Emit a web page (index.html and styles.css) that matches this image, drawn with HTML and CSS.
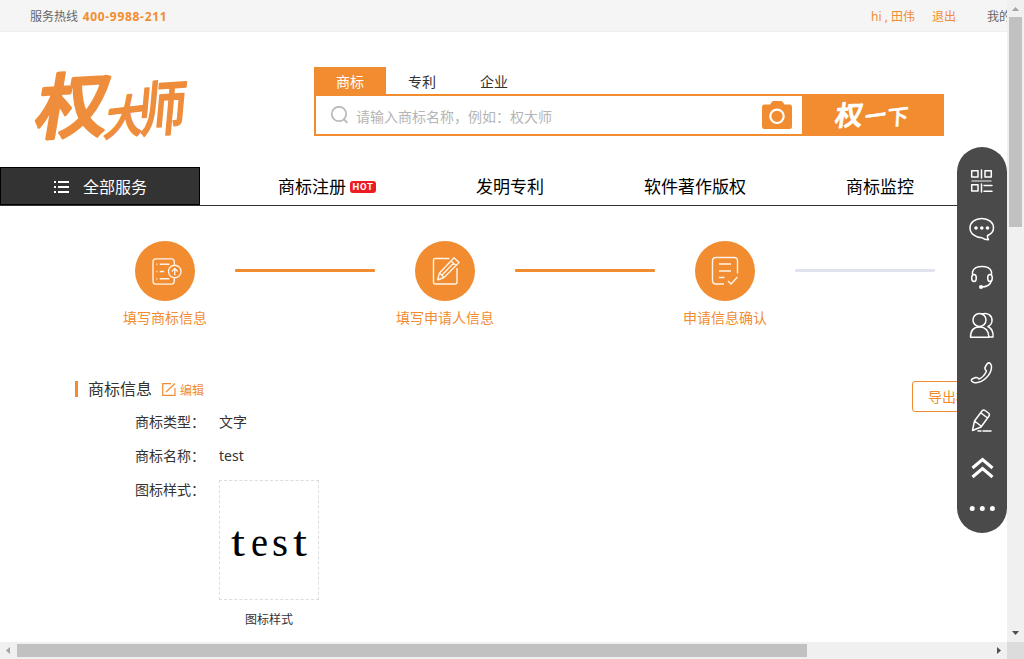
FILE: index.html
```html
<!DOCTYPE html>
<html lang="zh-CN">
<head>
<meta charset="utf-8">
<title>权大师</title>
<link rel="stylesheet" href="styles.css">
</head>
<body>
<div class="window">
  <div class="viewport">
    <div class="page">
      <div class="topbar">
        <span class="hotline">服务热线 <b>400-9988-211</b></span>
        <span class="hello">hi , 田伟</span>
        <span class="logout">退出</span>
        <span class="mine">我的</span>
      </div>
      <header class="header">
        <svg class="logo" width="160" height="84" viewBox="0 0 160 84">
          <g class="brush">
            <text transform="matrix(.98 -.06 -.16 .96 5 67)" font-size="74" stroke-width="3">权</text>
            <text transform="matrix(.85 -.1 -.18 1 75 69)" font-size="46" stroke-width="2">大</text>
            <text transform="matrix(.88 -.06 -.1 1.1 109 65)" font-size="54" stroke-width="1.500">师</text>
          </g>
        </svg>
        <div class="search">
          <div class="tabs"><span class="tab active">商标</span><span class="tab">专利</span><span class="tab">企业</span></div>
          <div class="searchbox">
            <svg class="lens" width="18" height="18" viewBox="0 0 18 18"><circle cx="8" cy="8" r="7.2"/><path d="M12.5 13l4 3.8"/></svg>
            <span class="placeholder">请输入商标名称，例如：权大师</span>
            <svg class="camera" width="30" height="28" viewBox="0 0 30 28"><path d="M2.500 3.500H8L10 .8Q10.500 0 11.500 0H19Q20 0 20.500.8L22.500 3.500H27.500Q30 3.500 30 6V25.500Q30 28 27.500 28H2.500Q0 28 0 25.500V6Q0 3.500 2.500 3.500Z"/><circle cx="15" cy="15.300" r="6.700"/></svg>
            <div class="go">
              <svg width="84" height="38" viewBox="0 0 84 38">
                <g class="brush light">
                  <text transform="matrix(.95 -.05 -.14 .95 6 30)" font-size="29" stroke-width="1">权</text>
                  <text transform="matrix(.88 -.12 -.1 1 36 30)" font-size="24" stroke-width=".6">一</text>
                  <text transform="matrix(.88 -.1 -.05 .9 59 30)" font-size="24" stroke-width=".6">下</text>
                </g>
              </svg>
            </div>
          </div>
        </div>
      </header>
      <nav class="nav">
        <div class="all"><svg width="15" height="12" viewBox="0 0 15 12"><path d="M0 1h2M4 1h11M0 6h2M4 6h11M0 11h2M4 11h11"/></svg><span>全部服务</span></div>
        <div class="links">
          <span class="link">商标注册<i class="hot">HOT</i></span>
          <span class="link">发明专利</span>
          <span class="link">软件著作版权</span>
          <span class="link">商标监控</span>
        </div>
      </nav>
      <div class="steps">
        <div class="step">
          <div class="disc first"><svg width="31" height="29" viewBox="0 0 32 30"><path d="M23 8V5Q23 2 20 2H4Q1 2 1 5V25Q1 28 4 28H20Q23 28 23 25V22M8 7.500H18M8 15H12.500M8 22.500H18M4.500 7.500H5.500M4.500 15H5.500M4.500 22.500H5.500M23.500 19V12M20.500 15L23.500 12L26.500 15"/><circle cx="23.500" cy="15" r="6.500"/></svg></div>
          <span>填写商标信息</span>
        </div>
        <div class="line"></div>
        <div class="step">
          <div class="disc second"><svg width="28" height="30" viewBox="0 0 28 30"><path d="M17.500 2.500H3.500Q1.500 2.500 1.500 4.500V26Q1.500 28 3.500 28H23Q25 28 25 26V12M5.500 24L7.500 17L22 1.800L27 6.500L12 21.500L5.500 24M7.500 17L12 21.500M19 5L24 9.500M10 19L21.500 7.200"/></svg></div>
          <span>填写申请人信息</span>
        </div>
        <div class="line"></div>
        <div class="step">
          <div class="disc"><svg width="28" height="30" viewBox="0 0 28 30"><path d="M13 28H5Q1.500 28 1.500 24.500V5Q1.500 1.500 5 1.500H23Q26.500 1.500 26.500 5V17.500M8 8H20M8 15H20M8 21.500H13.500M17 25L20 28L26.500 21"/></svg></div>
          <span>申请信息确认</span>
        </div>
        <div class="line pending"></div>
      </div>
      <section class="info">
        <div class="heading">
          <i class="bar"></i><span class="title">商标信息</span>
          <svg class="edit" width="14" height="13" viewBox="0 0 14 13"><path d="M9 .7H.7V12.300H13V5M4 9L13 .5"/></svg>
          <span class="edit-label">编辑</span>
          <span class="export">导出模板</span>
        </div>
        <div class="row"><span class="label">商标类型：</span><span>文字</span></div>
        <div class="row"><span class="label">商标名称：</span><span>test</span></div>
        <div class="row"><span class="label">图标样式：</span>
          <div class="figure"><div class="sample"><svg width="98" height="118" viewBox="0 0 98 118"><g class="mark"><text x="11" y="75" textLength="14" lengthAdjust="spacingAndGlyphs">t</text><text x="31" y="75" textLength="17" lengthAdjust="spacingAndGlyphs">e</text><text x="52" y="75" textLength="16" lengthAdjust="spacingAndGlyphs">s</text><text x="73" y="75" textLength="14" lengthAdjust="spacingAndGlyphs">t</text></g></svg></div><span class="caption">图标样式</span></div>
        </div>
      </section>
    </div>
    <aside class="dock">
      <svg width="50" height="386" viewBox="0 0 50 386">
        <g class="thin">
          <path d="M14.700 23.700H21V30H14.700ZM28 23.700H34.300V30H28ZM14.700 37.700H21V44H14.700ZM24.500 23V31M24.500 37V45M27 38.500H35M27 44.200H35"/><path class="dim" d="M15 34H34"/>
          <path d="M30.500 88.500C34 87 36.500 84 36.500 81C36.500 75.500 31.500 71.500 24.800 71.500S13 75.500 13 81S18.500 90.700 25 90.700Q27.500 92.800 31.500 92.700Q30.300 91 30.500 88.500Z"/>
          <path d="M15.500 127V125C17 117.500 33 117.500 34.500 125V127M24 140Q33 140 34.500 133.500"/><ellipse cx="17" cy="131" rx="2.300" ry="3.500"/><ellipse cx="33" cy="131" rx="2.300" ry="3.500"/>
          <circle cx="22.500" cy="173" r="6.500"/><path d="M13.500 190.300Q13.500 180 22.500 180T32 190.300ZM25 167C31 165 35.500 169 35 174Q34.500 178 31 179.500Q37 183 36 190H32"/>
          <path d="M30 217Q33 214 34.500 219C35 227 26 237 17 235.500Q13 234 15 232L18.500 230.500Q20.500 230 22 232Q27 230 29.500 224Q27 222 28.500 219.500Z"/>
          <path d="M15.500 283.500L17.500 274L25 264Q26.500 262.500 28 263.500L31.500 266Q33 267 32 269L24 280L15.500 283.500M17.500 274L24 279M24 266L30.500 271M21 284H24M26 284H34"/>
        </g>
        <path class="thick" d="M15.500 321L25.500 312.500L35.500 321M15.500 330L25.500 321.500L35.500 330"/>
        <g class="dots"><circle cx="19" cy="81" r="1.800"/><circle cx="24.800" cy="81" r="1.800"/><circle cx="30.500" cy="81" r="1.800"/><circle cx="24" cy="140" r="2"/><circle cx="15.200" cy="361.500" r="2.500"/><circle cx="25.300" cy="361.500" r="2.500"/><circle cx="35.400" cy="361.500" r="2.500"/></g>
      </svg>
    </aside>
  </div>
  <div class="vscroll"><svg width="17" height="17"><path class="soft" d="M5 11h7L8.500 7z"/></svg><div class="vthumb"></div><svg width="17" height="17"><path d="M5 6h7L8.500 10z"/></svg></div>
  <div class="hscroll"><svg width="17" height="17"><path class="soft" d="M10 5v7L6 8.500z"/></svg><div class="hthumb"></div><svg width="17" height="17"><path d="M7 5v7l4-3.500z"/></svg></div>
  <div class="corner"></div>
</div>
</body>
</html>
```
FILE: styles.css
```css
* { box-sizing: border-box; }
body { margin: 0; font: 14px "Noto Sans", "Noto Sans CJK SC", sans-serif; color: #333; overflow: hidden; }
svg { display: block; flex: none; }
.window { display: grid; grid-template: 642px 17px / 1007px 17px; width: 1024px; height: 659px; }
.viewport { position: relative; overflow: hidden; background: #fff; }
.page { width: 1200px; }

.topbar { display: flex; height: 32px; line-height: 34px; padding-left: 30px; background: #f5f5f5; border-bottom: 1px solid #eee; font-size: 12px; color: #666; white-space: nowrap; }
.hotline { width: 841px; word-spacing: 1.500px; }
.hotline b { color: #f18d30; font-size: 12px; letter-spacing: .7px; }
.hello { width: 61px; color: #f18d30; }
.logout { width: 55px; color: #f18d30; }

.header { display: flex; height: 135px; padding: 35px 0 0 28px; }
.logo { margin-right: 126px; overflow: visible; }
.brush { font-family: "Noto Sans CJK SC", sans-serif; font-weight: 500; fill: #ee8d3c; stroke: #ee8d3c; stroke-linejoin: round; }
.light { fill: #fff; stroke: #fff; }
.search { width: 630px; }
.tabs { display: flex; height: 27px; }
.tab { width: 72px; line-height: 29px; text-align: center; }
.active { background: #f18d30; color: #fff; }
.searchbox { display: flex; align-items: center; height: 42px; border: 2px solid #f18d30; padding-left: 15px; }
.lens { fill: none; stroke: #bbb; stroke-width: 1.800; margin-right: 7px; }
.placeholder { flex: 1; color: #b5b5b5; padding-top: 1px; }
.camera { fill: #f18d30; margin-right: 10px; }
.camera circle { stroke: #fff; stroke-width: 2.200; }
.go { display: flex; align-items: center; width: 140px; height: 38px; background: #f18d30; padding-left: 26px; }

.nav { display: flex; height: 39px; border-bottom: 1px solid #333; color: #000; }
.all { display: flex; align-items: center; width: 200px; height: 38px; padding: 1px 0 0 53px; gap: 14px; background: #333; border: 1px solid #000; color: #fff; font-size: 16px; line-height: 34px; }
.all path { stroke: #fff; stroke-width: 2; }
.links { display: flex; gap: 100px; padding-left: 78px; line-height: 40px; font-size: 17px; white-space: nowrap; }
.link { display: flex; align-items: center; height: 40px; }
.hot { width: 26px; height: 12px; margin-left: 4px; border-radius: 3px; background: #ed1c24; color: #fff; font: bold 9.500px/12px Roboto, sans-serif; letter-spacing: .7px; text-align: center; }

.steps { display: flex; height: 175px; padding: 35px 0 0 95px; }
.step { width: 140px; text-align: center; color: #f18d30; line-height: 34px; }
.disc { display: flex; align-items: center; justify-content: center; width: 60px; height: 60px; margin: 0 auto; border-radius: 50%; background: #f18d30; }
.first { padding-left: 5px; }
.second { padding-left: 2px; }
.disc path, .disc circle { fill: none; stroke: #fff3e8; stroke-width: 1.400; stroke-linejoin: round; }
.line { width: 140px; height: 3px; margin-top: 28px; border-radius: 1px; background: #f18d30; }
.pending { background: #e0e2ee; }

.info { padding-left: 75px; }
.heading { display: flex; align-items: center; height: 16px; margin-bottom: 8px; white-space: nowrap; }
.bar { width: 3px; height: 16px; background: #f18d30; margin-right: 10px; }
.title { font-size: 16px; margin-right: 10px; padding-bottom: 2px; }
.edit { fill: none; stroke: #f18d30; stroke-width: 1.200; margin: 1px 4px 0 0; }
.edit-label { width: 732px; font-size: 12px; color: #f18d30; padding-top: 1px; }
.export { align-self: flex-start; width: 104px; height: 31px; line-height: 29px; border: 1px solid #f18d30; border-radius: 3px; padding-left: 15px; color: #f18d30; }
.row { display: flex; min-height: 34px; line-height: 34px; padding-left: 60px; }
.label { width: 84px; }
.figure { padding-top: 7px; width: 100px; text-align: center; }
.sample { height: 120px; border: 1px dashed #ddd; }
.mark { font: 42px "Liberation Serif", serif; fill: #000; }
.caption { display: block; font-size: 12px; line-height: 40px; }

.dock { position: absolute; left: 957px; top: 147px; width: 50px; height: 386px; border-radius: 25px; background: #4a4a4a; }
.thin { fill: none; stroke: #fff; stroke-width: 1.500; stroke-linejoin: round; stroke-linecap: round; }
.thin .dim { stroke: #bbb; }
.thick { fill: none; stroke: #fff; stroke-width: 3; }
.dots { fill: #fff; }

.vscroll, .hscroll { display: flex; justify-content: space-between; background: #f0f0f0; fill: #505050; }
.vscroll { flex-direction: column; }
.soft { fill: #a3a3a3; }
.vthumb { width: 13px; height: 210px; margin: 0 2px auto; background: #c1c1c1; }
.hthumb { width: 790px; height: 13px; margin: 2px auto 2px 0; background: #c1c1c1; }
.corner { background: #dcdcdc; }
```
